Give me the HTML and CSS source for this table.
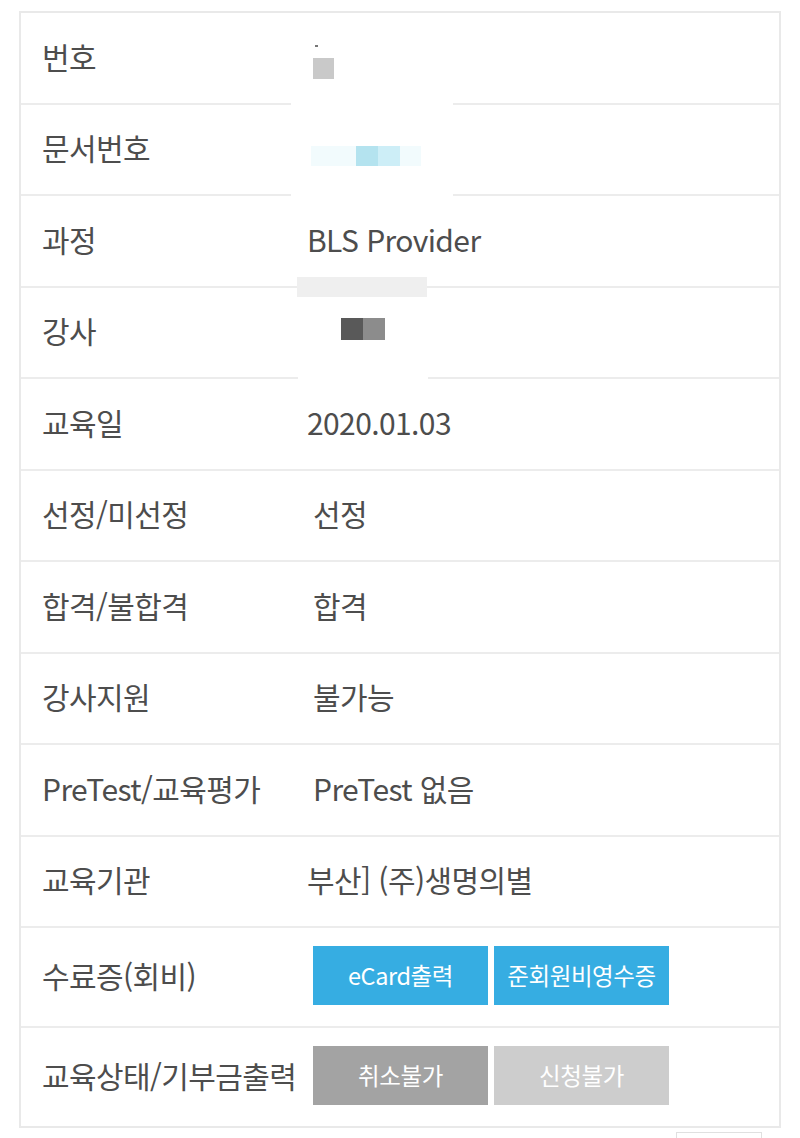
FILE: index.html
```html
<!DOCTYPE html>
<html lang="ko">
<head>
<meta charset="utf-8">
<link rel="stylesheet" href="styles.css">
</head>
<body>
<div class="page">
  <div class="table">
    <div class="row">
      <div class="label">번호</div>
      <div class="value"><span class="blot b-dot"></span><span class="blot b-gray"></span></div>
    </div>
    <div class="row">
      <div class="label">문서번호</div>
      <div class="value"><span class="blot b-haze"></span><span class="blot b-cyan1"></span><span class="blot b-cyan2"></span></div>
    </div>
    <div class="row">
      <div class="label">과정</div>
      <div class="value">BLS Provider</div>
    </div>
    <div class="row">
      <div class="label">강사</div>
      <div class="value"><span class="blot b-dark1"></span><span class="blot b-dark2"></span></div>
    </div>
    <div class="row">
      <div class="label">교육일</div>
      <div class="value">2020.01.03</div>
    </div>
    <div class="row">
      <div class="label">선정/미선정</div>
      <div class="value indent">선정</div>
    </div>
    <div class="row">
      <div class="label">합격/불합격</div>
      <div class="value indent">합격</div>
    </div>
    <div class="row">
      <div class="label">강사지원</div>
      <div class="value indent">불가능</div>
    </div>
    <div class="row">
      <div class="label">PreTest/교육평가</div>
      <div class="value indent">PreTest 없음</div>
    </div>
    <div class="row">
      <div class="label">교육기관</div>
      <div class="value">부산] (주)생명의별</div>
    </div>
    <div class="row tall">
      <div class="label">수료증(회비)</div>
      <div class="value buttons">
        <span class="btn blue">eCard출력</span>
        <span class="btn blue">준회원비영수증</span>
      </div>
    </div>
    <div class="row tall">
      <div class="label">교육상태/기부금출력</div>
      <div class="value buttons">
        <span class="btn dark">취소불가</span>
        <span class="btn light">신청불가</span>
      </div>
    </div>
    <span class="mask m1"></span>
    <span class="mask m2"></span>
    <span class="mask m3"></span>
    <span class="mask m4"></span>
  </div>
  <div class="footer">
    <span class="ghost-btn"></span>
  </div>
</div>
</body>
</html>
```
FILE: styles.css
```css
html, body {
  margin: 0;
  padding: 0;
  background: #ffffff;
}
body {
  font-family: "Noto Sans CJK KR", "Noto Sans", sans-serif;
  color: #4d4d4d;
}
.page {
  padding: 11px 19px 0 19px;
}
.table {
  position: relative;
  border: 2px solid #e9e9e9;
  background: #fff;
}
.row {
  display: flex;
  align-items: center;
  box-sizing: border-box;
  height: 91.5px;
  padding-bottom: 4px;
  border-bottom: 2px solid #ececec;
}
.row:last-of-type {
  border-bottom: none;
  height: 98px;
}
.row.tall {
  height: 100px;
}
.row.tall:last-of-type {
  height: 98px;
}
.label {
  width: 265px;
  padding-left: 21px;
  font-size: 30px;
  letter-spacing: -0.6px;
  white-space: nowrap;
}
.value {
  position: relative;
  flex: 1;
  align-self: stretch;
  display: flex;
  align-items: center;
  font-size: 30px;
  letter-spacing: -0.6px;
  white-space: nowrap;
}
.value.indent {
  padding-left: 6px;
}
.buttons {
  padding-left: 6px;
  gap: 6px;
}
.btn {
  width: 175px;
  height: 59px;
  display: flex;
  align-items: center;
  justify-content: center;
  color: #ffffff;
  font-size: 23.5px;
  letter-spacing: -0.4px;
}
.btn.blue { background: #36ade2; }
.btn.dark { background: #a3a3a3; }
.btn.light { background: #cdcdcd; }

.blot {
  position: absolute;
  display: block;
}
.b-dot { left: 8px; top: 32px; width: 3px; height: 2px; background: #777; }
.b-gray { left: 6px; top: 45px; width: 21px; height: 21px; background: #c9c9c9; }
.b-haze { left: 4px; top: 41px; width: 110px; height: 20px; background: #f2fbfd; }
.b-cyan1 { left: 49px; top: 41px; width: 22px; height: 20px; background: #b4e3ef; }
.b-cyan2 { left: 71px; top: 41px; width: 22px; height: 20px; background: #cdeef7; }
.b-dark1 { left: 34px; top: 30px; width: 22px; height: 22px; background: #595959; }
.b-dark2 { left: 56px; top: 30px; width: 22px; height: 22px; background: #8c8c8c; }

.mask {
  position: absolute;
  display: block;
}
.m1 { left: 270px; top: 88px; width: 162px; height: 4px; background: #ffffff; }
.m2 { left: 270px; top: 180px; width: 162px; height: 4px; background: #ffffff; }
.m3 { left: 276px; top: 264px; width: 130px; height: 20px; background: #efefef; }
.m4 { left: 277px; top: 363px; width: 130px; height: 4px; background: #ffffff; }

.footer {
  display: flex;
  justify-content: flex-end;
  padding: 4px 19px 0 0;
  height: 20px;
}
.ghost-btn {
  display: block;
  width: 84px;
  height: 20px;
  border: 1px solid #e0e0e0;
  border-bottom: none;
}
```
